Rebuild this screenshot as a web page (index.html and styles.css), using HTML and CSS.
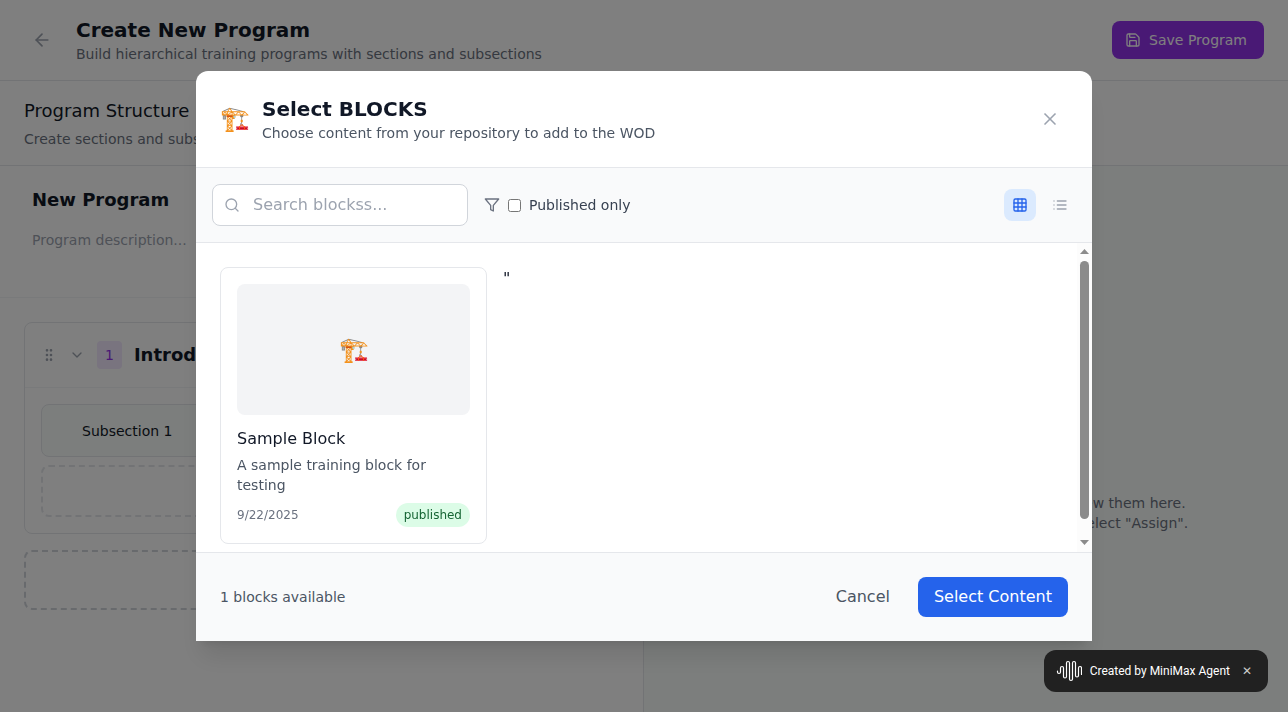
FILE: index.html
```html
<!DOCTYPE html>
<html lang="en">
<head>
<meta charset="utf-8">
<title>Create New Program</title>
<link rel="stylesheet" href="styles.css">
</head>
<body>
<div class="app">
  <header class="app-header">
    <button class="back-button" type="button" aria-label="Back">
      <svg class="icon icon-md" viewBox="0 0 24 24"><path d="m12 19-7-7 7-7"/><path d="M19 12H5"/></svg>
    </button>
    <div class="app-heading">
      <h1 class="app-title">Create New Program</h1>
      <p class="app-subtitle">Build hierarchical training programs with sections and subsections</p>
    </div>
    <button class="save-button" type="button">
      <svg class="icon" viewBox="0 0 24 24"><path d="M15.2 3a2 2 0 0 1 1.4.6l3.8 3.8a2 2 0 0 1 .6 1.4V19a2 2 0 0 1-2 2H5a2 2 0 0 1-2-2V5a2 2 0 0 1 2-2z"/><path d="M17 21v-7a1 1 0 0 0-1-1H8a1 1 0 0 0-1 1v7"/><path d="M7 3v4a1 1 0 0 0 1 1h7"/></svg>
      Save Program
    </button>
  </header>
  <main class="panels">
    <section class="panel panel-structure">
      <div class="panel-header">
        <h2 class="panel-title">Program Structure</h2>
        <p class="panel-subtitle">Create sections and subsections</p>
      </div>
      <div class="program-info">
        <input class="program-name" type="text" value="New Program" aria-label="Program name">
        <textarea class="program-description" placeholder="Program description..." aria-label="Program description"></textarea>
      </div>
      <div class="section-list">
        <article class="section-card">
          <div class="section-header">
            <svg class="icon muted" viewBox="0 0 24 24"><circle cx="9" cy="12" r="1"/><circle cx="9" cy="5" r="1"/><circle cx="9" cy="19" r="1"/><circle cx="15" cy="12" r="1"/><circle cx="15" cy="5" r="1"/><circle cx="15" cy="19" r="1"/></svg>
            <button class="toggle-button" type="button" aria-label="Collapse section">
              <svg class="icon" viewBox="0 0 24 24"><path d="m6 9 6 6 6-6"/></svg>
            </button>
            <span class="section-number">1</span>
            <input class="section-name" type="text" value="Introduction" aria-label="Section name">
          </div>
          <div class="section-body">
            <div class="subsection">
              <input class="subsection-name" type="text" value="Subsection 1" aria-label="Subsection name">
            </div>
            <button class="add-button add-subsection" type="button" aria-label="Add subsection">
              <svg class="icon" viewBox="0 0 24 24"><path d="M5 12h14"/><path d="M12 5v14"/></svg>
            </button>
          </div>
        </article>
        <button class="add-button add-section" type="button" aria-label="Add section">
          <svg class="icon" viewBox="0 0 24 24"><path d="M5 12h14"/><path d="M12 5v14"/></svg>
        </button>
      </div>
    </section>
    <section class="panel panel-content">
      <div class="panel-header"></div>
      <p class="empty-hint">Assign content to sections and subsections to view them here.<br>Choose content for a section or subsection and select "Assign".</p>
    </section>
  </main>
</div>

<div class="overlay">
  <div class="modal" role="dialog" aria-modal="true" aria-labelledby="modal-title">
    <header class="modal-header">
      <span class="block-emoji" aria-hidden="true">🏗️</span>
      <div class="modal-heading">
        <h2 class="modal-title" id="modal-title">Select BLOCKS</h2>
        <p class="modal-subtitle">Choose content from your repository to add to the WOD</p>
      </div>
      <button class="close-button" type="button" aria-label="Close">
        <svg class="icon icon-md" viewBox="0 0 24 24"><path d="M18 6 6 18"/><path d="m6 6 12 12"/></svg>
      </button>
    </header>
    <div class="toolbar">
      <label class="search">
        <svg class="icon" viewBox="0 0 24 24"><circle cx="11" cy="11" r="8"/><path d="m21 21-4.3-4.3"/></svg>
        <input class="search-input" type="text" placeholder="Search blockss..." aria-label="Search blocks">
      </label>
      <div class="filter">
        <svg class="icon filter-icon" viewBox="0 0 24 24"><path d="M22 3H2l8 9.46V19l4 2v-8.54z"/></svg>
        <label class="filter-label"><input class="filter-check" type="checkbox">Published only</label>
      </div>
      <div class="view-switch">
        <button class="view-button active" type="button" aria-label="Grid view">
          <svg class="icon" viewBox="0 0 24 24"><rect width="18" height="18" x="3" y="3" rx="2"/><path d="M3 9h18"/><path d="M3 15h18"/><path d="M9 3v18"/><path d="M15 3v18"/></svg>
        </button>
        <button class="view-button" type="button" aria-label="List view">
          <svg class="icon" viewBox="0 0 24 24"><path d="M3 12h.01M3 18h.01M3 6h.01M8 12h13M8 18h13M8 6h13"/></svg>
        </button>
      </div>
    </div>
    <div class="modal-content">
      <div class="modal-scroll">
        <div class="card-grid">
          <article class="card">
            <div class="card-thumb"><span class="block-emoji" aria-hidden="true">🏗️</span></div>
            <h3 class="card-title">Sample Block</h3>
            <p class="card-text">A sample training block for testing</p>
            <div class="card-meta"><span class="card-date">9/22/2025</span><span class="status">published</span></div>
          </article>
          <span class="stray">"</span>
        </div>
      </div>
      <div class="scrollbar" aria-hidden="true">
        <svg class="scroll-arrow" viewBox="0 0 9 5"><path d="M0 5 4.500 0 9 5z"/></svg>
        <div class="scroll-track"><div class="scroll-thumb"></div></div>
        <svg class="scroll-arrow" viewBox="0 0 9 5"><path d="M0 0h9L4.500 5z"/></svg>
      </div>
    </div>
    <footer class="modal-footer">
      <span class="count">1 blocks available</span>
      <div class="modal-actions">
        <button class="cancel-button" type="button">Cancel</button>
        <button class="select-button" type="button">Select Content</button>
      </div>
    </footer>
  </div>
</div>

<aside class="toast">
  <svg class="toast-logo" viewBox="0 0 26 22"><path d="M1.500 11v1a1.500 1.500 0 0 0 3 0V8a1.500 1.500 0 0 1 3 0v8.500a1.500 1.500 0 0 0 3 0V3a1.500 1.500 0 0 1 3 0v16a1.500 1.500 0 0 0 3 0V3a1.500 1.500 0 0 1 3 0v12.500a1.500 1.500 0 0 0 3 0V8a1.500 1.500 0 0 1 3 0v6.500"/></svg>
  <span class="toast-text">Created by MiniMax Agent</span>
  <button class="toast-close" type="button" aria-label="Dismiss">✕</button>
</aside>
</body>
</html>
```
FILE: styles.css
```css
*, *::before, *::after { box-sizing: border-box; }
body {
  margin: 0;
  font-family: "DejaVu Sans", sans-serif;
  font-size: 16px;
  line-height: 24px;
  color: #111827;
  background: #fff;
}
h1, h2, h3, p { margin: 0; font-weight: 400; }
button, input, textarea { font: inherit; color: inherit; margin: 0; padding: 0; border: 0; background: none; }
button { cursor: pointer; }
.icon { width: 16px; height: 16px; flex: none; display: block; fill: none; stroke: currentColor; stroke-width: 2; stroke-linecap: round; stroke-linejoin: round; }
.icon-md { width: 20px; height: 20px; }
.muted { color: #9ca3af; }

.app { height: 100vh; display: flex; flex-direction: column; overflow: hidden; }
.app-header { display: flex; align-items: center; gap: 16px; padding: 16px 24px; border-bottom: 1px solid #e5e7eb; }
.back-button { padding: 8px; color: #9ca3af; }
.app-heading { flex: 1; }
.app-title { font-size: 20px; line-height: 28px; font-weight: 700; }
.app-subtitle { font-size: 14px; line-height: 20px; color: #6b7280; }
.save-button { display: flex; align-items: center; gap: 8px; padding: 8px 16px 8px 12px; border: 1px solid transparent; border-radius: 8px; background: #9333ea; color: #fff; font-size: 14px; line-height: 20px; }

.panels { flex: 1; display: grid; grid-template-columns: 1fr 1fr; min-height: 0; }
.panel-structure { border-right: 1px solid #e5e7eb; }
.panel-content { background: #f9fcfa; }
.panel-header { min-height: 85px; padding: 16px 24px; border-bottom: 1px solid #e5e7eb; background: #fff; }
.panel-title { font-size: 18px; line-height: 28px; }
.panel-subtitle { margin-top: 4px; font-size: 14px; line-height: 20px; color: #6b7280; }
.program-info { display: flex; flex-direction: column; gap: 8px; padding: 16px 24px; border-bottom: 1px solid #f3f4f6; }
.program-name { padding: 4px 8px; font-size: 18px; line-height: 28px; font-weight: 700; }
.program-description { display: block; height: 55px; padding: 4px 8px; font-size: 14px; line-height: 20px; resize: none; }
::placeholder { color: #9ca3af; opacity: 1; }
.section-list { display: flex; flex-direction: column; gap: 16px; padding: 24px; }
.section-card { border: 1px solid #e5e7eb; border-radius: 8px; }
.section-header { display: flex; align-items: center; gap: 8px; height: 65px; padding: 0 16px; border-bottom: 1px solid #f3f4f6; }
.toggle-button { padding: 4px; color: #9ca3af; }
.section-number { padding: 4px 8px; border-radius: 4px; background: #f3e8ff; color: #9333ea; font-size: 14px; line-height: 20px; }
.section-name { flex: 1; min-width: 0; padding: 0 4px; font-size: 18px; line-height: 28px; font-weight: 700; }
.section-body { display: flex; flex-direction: column; gap: 8px; padding: 16px; }
.subsection { display: flex; align-items: center; height: 53px; padding: 0 40px; border: 1px solid #e5e7eb; border-radius: 8px; background: #f9fcfa; }
.subsection-name { flex: 1; font-size: 14px; line-height: 20px; }
.add-button { display: flex; align-items: center; justify-content: center; border: 2px dashed #e5e7eb; border-radius: 8px; color: #6b7280; }
.add-subsection { padding: 16px; }
.add-section { padding: 20px; border-color: #d1d5db; }
.empty-hint { padding: 327px 24px 0; text-align: center; font-size: 14px; line-height: 20px; color: #6b7280; }

.overlay { position: fixed; inset: 0; display: flex; align-items: center; justify-content: center; padding: 16px; background: rgba(0, 0, 0, .5); }
.modal { display: flex; flex-direction: column; width: 100%; max-width: 896px; height: 80vh; border-radius: 12px 12px 0 0; background: #fff; box-shadow: 0 20px 25px -5px rgba(0, 0, 0, .1), 0 8px 10px -6px rgba(0, 0, 0, .1); }
.modal-header { display: flex; align-items: center; gap: 12px; padding: 24px; border-bottom: 1px solid #e5e7eb; }
.block-emoji { font-size: 24px; line-height: 32px; }
.modal-heading { flex: 1; }
.modal-title { font-size: 20px; line-height: 28px; font-weight: 700; }
.modal-subtitle { font-size: 14px; line-height: 20px; color: #4b5563; }
.close-button { padding: 8px; color: #9ca3af; }
.toolbar { display: flex; align-items: center; gap: 16px; padding: 16px; border-bottom: 1px solid #e5e7eb; background: #f9fafb; }
.search { display: flex; align-items: center; gap: 13px; width: 256px; padding: 8px 11px; border: 1px solid #d1d5db; border-radius: 8px; background: #fff; color: #9ca3af; }
.search-input { flex: 1; min-width: 0; height: 24px; outline: 0; color: #111827; }
.filter { display: flex; align-items: center; gap: 8px; flex: 1; }
.filter-icon { color: #6b7280; }
.filter-label { display: flex; align-items: center; gap: 8px; font-size: 14px; line-height: 20px; color: #374151; }
.filter-check { width: 13px; height: 13px; }
.view-switch { display: flex; gap: 8px; }
.view-button { padding: 8px; border-radius: 8px; color: #9ca3af; }
.view-button.active { background: #dbeafe; color: #2563eb; }
.modal-content { display: flex; flex: 1; min-height: 0; }
.modal-scroll { flex: 1; min-width: 0; overflow-y: auto; scrollbar-width: none; padding: 24px; }
.scrollbar { display: flex; flex-direction: column; align-items: center; gap: 7px; width: 15px; padding: 6px 0 7px; background: #fcfcfc; }
.scroll-arrow { width: 9px; height: 5px; flex: none; fill: #8b8b8b; }
.scroll-track { flex: 1; width: 9px; }
.scroll-thumb { height: 95%; border-radius: 5px; background: #8b8b8b; }
.card-grid { display: grid; grid-template-columns: repeat(3, 1fr); gap: 16px; }
.card { padding: 16px; border: 1px solid #e5e7eb; border-radius: 8px; }
.card-thumb { display: flex; align-items: center; justify-content: center; aspect-ratio: 16 / 9; margin-bottom: 12px; border-radius: 8px; background: #f3f4f6; }
.card-title { margin-bottom: 4px; font-size: 16px; line-height: 24px; }
.card-text { margin-bottom: 8px; font-size: 14px; line-height: 20px; color: #4b5563; }
.card-meta { display: flex; align-items: center; justify-content: space-between; font-size: 12px; line-height: 16px; color: #6b7280; }
.status { padding: 4px 8px; border-radius: 12px; background: #dcfce7; color: #166534; }
.modal-footer { display: flex; align-items: center; justify-content: space-between; padding: 24px; border-top: 1px solid #e5e7eb; background: #f9fafb; }
.count { font-size: 14px; line-height: 20px; color: #4b5563; }
.modal-actions { display: flex; gap: 12px; }
.cancel-button { padding: 8px 16px; color: #4b5563; }
.select-button { padding: 8px 16px; border-radius: 8px; background: #2563eb; color: #fff; }

.toast { position: fixed; right: 20px; bottom: 20px; display: flex; align-items: center; gap: 8px; height: 42px; padding: 0 12px; border-radius: 12px; background: #212121; color: #fff; font-family: Roboto, sans-serif; font-size: 12px; line-height: 16px; }
.toast-logo { width: 26px; height: 22px; fill: none; stroke: #fff; stroke-width: 1.2; stroke-linecap: round; }
.toast-close { width: 18px; height: 18px; color: #ccc; font-size: 12px; line-height: 18px; }
```
